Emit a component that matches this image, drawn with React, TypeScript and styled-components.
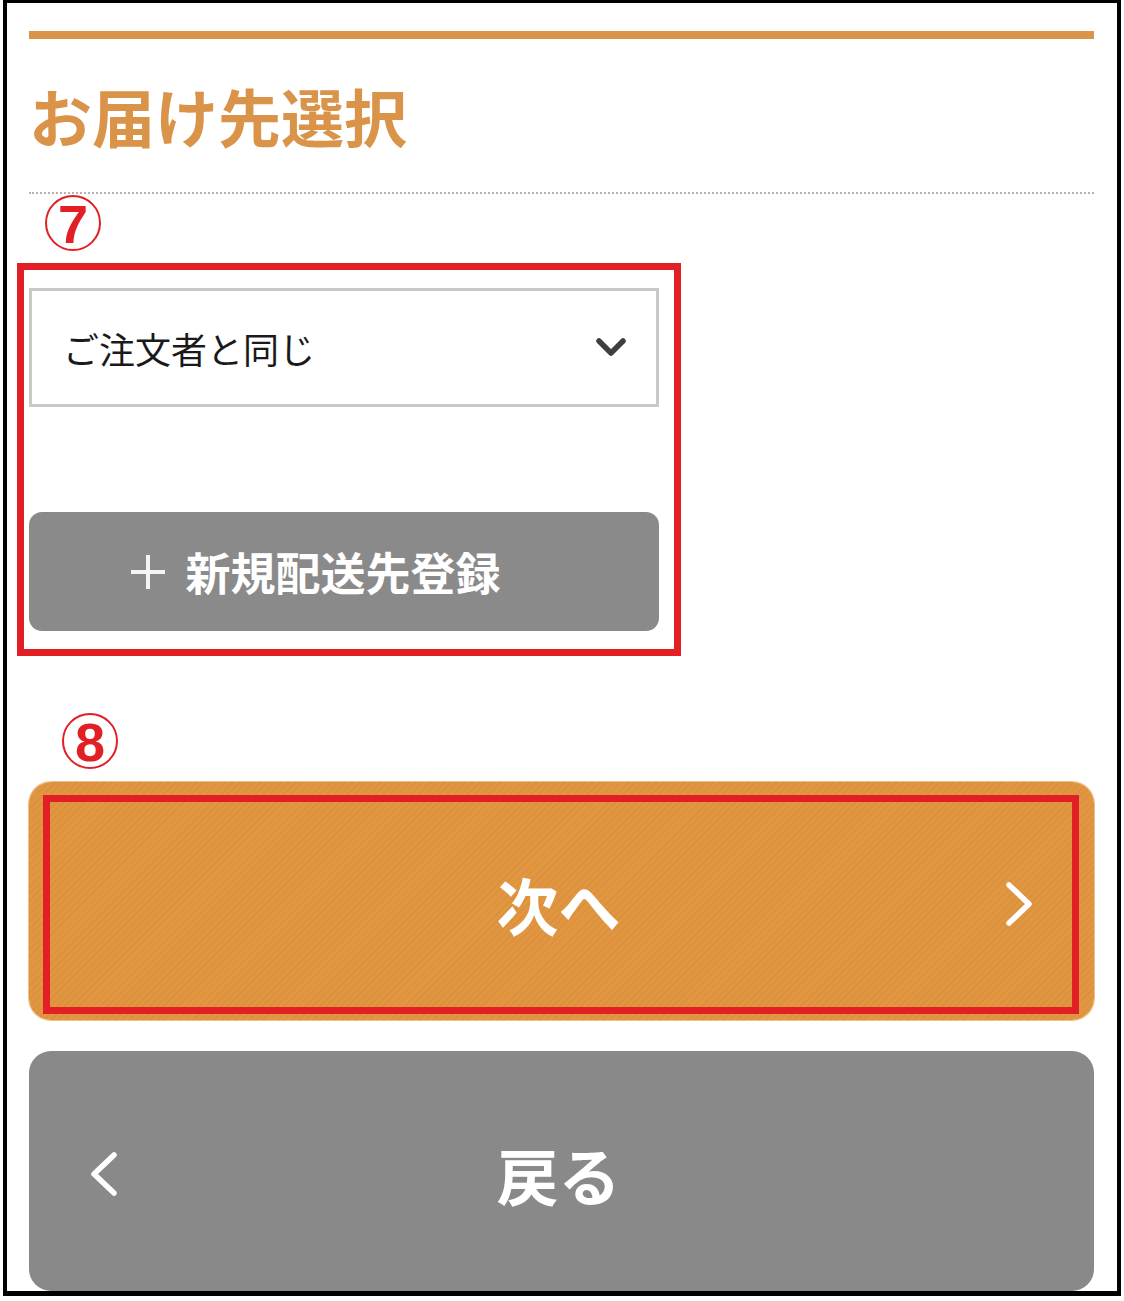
import React from "react";
import styled, { createGlobalStyle } from "styled-components";

const GlobalStyle = createGlobalStyle`
  html, body {
    margin: 0;
    padding: 0;
    background: #ffffff;
  }
  body {
    font-family: "Noto Sans CJK JP", "Noto Sans", sans-serif;
  }
  * { box-sizing: border-box; }
`;

const RED = "#e31f26";
const ORANGE = "#d9944a";

const Frame = styled.div`
  margin: 0 3px 5px 3px;
  border-style: solid;
  border-color: #000;
  border-width: 3px 4px 5px 4px;
  background: #fff;
  padding: 0 23px 0 22px;
  display: flex;
  flex-direction: column;
`;

const TopBar = styled.div`
  margin-top: 28px;
  height: 8px;
  background: ${ORANGE};
`;

const Title = styled.h1`
  margin: 45px 0 0 0;
  font-size: 63px;
  line-height: 62px;
  font-weight: 700;
  color: ${ORANGE};
  letter-spacing: 0;
`;

const Divider = styled.div`
  margin-top: 46px;
  border-top: 2px dotted #b3b3b3;
`;

const Mark = styled.div<{ $top: number; $left: number }>`
  margin-top: ${(p) => p.$top}px;
  margin-left: ${(p) => p.$left}px;
  width: 56px;
  height: 56px;
  border: 2px solid ${RED};
  border-radius: 50%;
  display: flex;
  align-items: center;
  justify-content: center;
  color: ${RED};
  font-family: "Liberation Sans", Arial, sans-serif;
  font-weight: 700;
  font-size: 54px;
  line-height: 1;
  padding-top: 2px;
`;

const RedBox = styled.div`
  margin-top: 12px;
  margin-left: -12px;
  width: 664px;
  border: 7px solid ${RED};
  padding: 18px 15px 18px 5px;
  display: flex;
  flex-direction: column;
  gap: 105px;
`;

const Select = styled.div`
  height: 119px;
  border: 3px solid #c9c9c9;
  background: #fff;
  display: flex;
  align-items: center;
  justify-content: space-between;
  padding: 0 30px 0 31px;
  font-size: 36px;
  color: #1a1a1a;
`;

const AddButton = styled.div`
  height: 119px;
  border-radius: 13px;
  background: #8a8a8a;
  display: flex;
  align-items: center;
  justify-content: center;
  gap: 18px;
  padding-right: 58px;
  color: #fff;
  font-size: 45px;
  font-weight: 700;
`;

const BigButton = styled.div<{ $variant: "next" | "back" }>`
  position: relative;
  height: ${(p) => (p.$variant === "next" ? 238 : 240)}px;
  margin-top: ${(p) => (p.$variant === "next" ? 13 : 31)}px;
  border-radius: 22px;
  background: ${(p) =>
    p.$variant === "next"
      ? "repeating-linear-gradient(135deg, #e1963f 0px, #e1963f 3px, #da9140 3px, #da9140 5px)"
      : "#898989"};
  box-shadow: ${(p) =>
    p.$variant === "next" ? "0 0 0 1px rgba(235, 175, 110, 0.8)" : "none"};
  display: grid;
  grid-template-columns: 1fr auto 1fr;
  align-items: center;
  padding: 6px 61px 0 61px;
  color: #fff;
  font-size: 62px;
  font-weight: 700;
`;

const Label = styled.span`
  line-height: 1;
  margin-left: -6px;
`;

const Side = styled.div<{ $align: "start" | "end" }>`
  justify-self: ${(p) => p.$align};
  display: flex;
  align-items: center;
`;

const Highlight = styled.div`
  position: absolute;
  top: 13px;
  left: 14px;
  right: 15px;
  bottom: 6px;
  border: 7px solid ${RED};
  pointer-events: none;
`;

const ChevronDown = () => (
  <svg width="30" height="20" viewBox="0 0 30 20">
    <polyline
      points="3,3 15,15 27,3"
      fill="none"
      stroke="#3f3f3f"
      strokeWidth="5.5"
      strokeLinecap="round"
      strokeLinejoin="round"
    />
  </svg>
);

const Plus = () => (
  <svg width="38" height="38" viewBox="0 0 38 38">
    <path d="M19 2 V36 M2 19 H36" stroke="#f4f4f4" strokeWidth="4" />
  </svg>
);

const ChevronRight = () => (
  <svg width="28" height="46" viewBox="0 0 28 46">
    <polyline
      points="4,4 24,23 4,42"
      fill="none"
      stroke="#fff"
      strokeWidth="5.5"
      strokeLinecap="round"
      strokeLinejoin="round"
    />
  </svg>
);

const ChevronLeft = () => (
  <svg width="28" height="46" viewBox="0 0 28 46">
    <polyline
      points="24,4 4,23 24,42"
      fill="none"
      stroke="#fff"
      strokeWidth="5.5"
      strokeLinecap="round"
      strokeLinejoin="round"
    />
  </svg>
);

export default function App() {
  return (
    <>
      <GlobalStyle />
      <Frame>
        <TopBar />
        <Title>お届け先選択</Title>
        <Divider />
        <Mark $top={1} $left={16}>7</Mark>
        <RedBox>
          <Select>
            <span>ご注文者と同じ</span>
            <ChevronDown />
          </Select>
          <AddButton>
            <Plus />
            <span>新規配送先登録</span>
          </AddButton>
        </RedBox>
        <Mark $top={57} $left={33}>8</Mark>
        <BigButton $variant="next">
          <Side $align="start" />
          <Label>次へ</Label>
          <Side $align="end">
            <ChevronRight />
          </Side>
          <Highlight />
        </BigButton>
        <BigButton $variant="back">
          <Side $align="start">
            <ChevronLeft />
          </Side>
          <Label>戻る</Label>
          <Side $align="end" />
        </BigButton>
      </Frame>
    </>
  );
}
